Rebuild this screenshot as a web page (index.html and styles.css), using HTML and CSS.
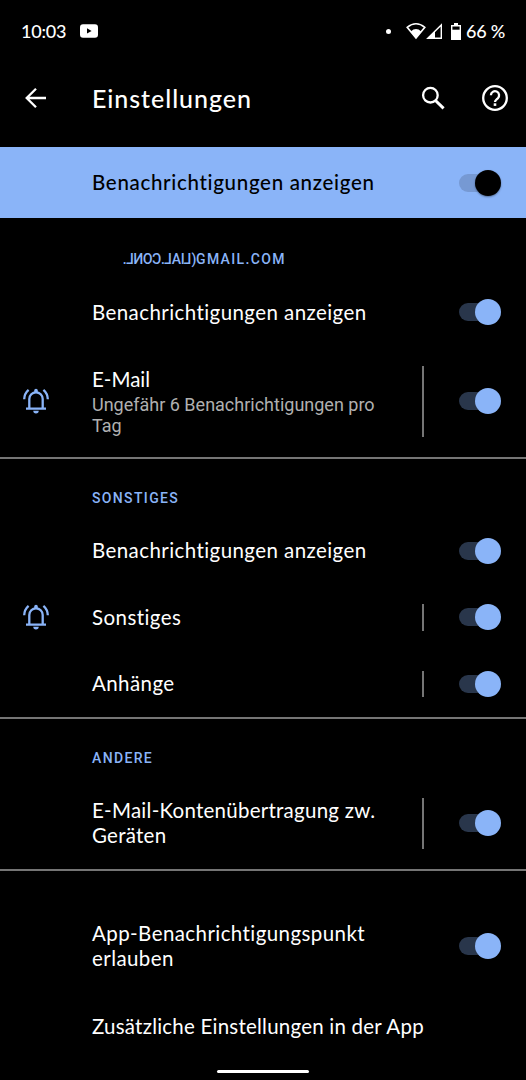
FILE: index.html
```html
<!DOCTYPE html>
<html lang="de">
  <head>
    <meta charset="UTF-8" />
    <title>Einstellungen</title>
    <link rel="stylesheet" href="styles.css">
  </head>
  <body>
    <!-- status bar -->
    <div class="status">
      <span class="time">10:03</span>
      <svg class="yt" width="18" height="14" viewBox="0 0 18 14">
        <rect width="18" height="13.4" y=".3" rx="3" fill="#fff" />
        <path d="M7 4.2v5.4L11.6 7z" fill="#000" />
      </svg>
      <span class="dot"></span>
      <svg class="wifi" width="20" height="18" viewBox="0 0 20 18">
        <path d="M1.2 5.3Q10-1.8 18.8 5.3L10 16z" fill="none" stroke="#fff" stroke-width="1.6" />
        <path d="M4.8 9.4Q10 4.8 15.2 9.4L10 16.2z" fill="#fff" />
      </svg>
      <svg class="signal" width="17" height="17" viewBox="0 0 17 17">
        <path d="M1.8 15.3L15.3 2v13.3z" fill="none" stroke="#fff" stroke-width="1.4" />
        <path d="M1 16L9 8v8z" fill="#fff" />
      </svg>
      <svg class="battery" width="10" height="17" viewBox="0 0 10 17">
        <path d="M3 0h4v2h3v15H0V2h3z" fill="#fff" />
        <path d="M1.4 3.5h7.2v3.2H1.4z" fill="#000" />
      </svg>
      <span class="percent">66 %</span>
    </div>

    <!-- toolbar -->
    <div class="toolbar">
      <svg class="back" width="22" height="22" viewBox="0 0 22 22">
        <path d="M21 11H2.2M11 1.7L1.7 11l9.3 9.3" />
      </svg>
      <h1>Einstellungen</h1>
      <svg class="search" width="24" height="24" viewBox="0 0 24 24">
        <circle cx="9.4" cy="9.2" r="7.3" />
        <path d="M14.2 14.2l8.4 8.2" stroke-width="3" />
      </svg>
      <svg class="help" width="26" height="26" viewBox="0 0 26 26">
        <circle cx="13" cy="13" r="11.8" />
        <path d="M8.9 10.3a4.1 4.1 0 1 1 6.9 3c-1.6 1.4-2.8 1.9-2.8 3.7" />
        <path d="M13 18.3v2.6" stroke-width="2.6" />
      </svg>
    </div>

    <div class="banner">
      <span class="label">Benachrichtigungen anzeigen</span>
      <span class="switch"></span>
    </div>

    <div class="section first">
      <h2 class="account"><span class="prefix"><span class="flip">L.CONL.</span><span>AI</span><span class="flip">L</span><span>)</span></span><span>GMAIL.COM</span></h2>
      <div class="row">
        <span class="label">Benachrichtigungen anzeigen</span>
        <span class="switch"></span>
      </div>
      <div class="row tall">
        <svg class="bell" width="26" height="26" viewBox="0 0 26 26">
          <path d="M3 20.7h20M6.3 20.5V11a6.7 6.7 0 0 1 13.4 0v9.5M1.2 11.3Q1.4 5.3 5.6 1.8M24.8 11.3Q24.6 5.3 20.4 1.8" />
          <path class="fill" d="M11.2 4V2.5a1.8 1.8 0 0 1 3.6 0V4zM10.3 22.8h5.4a2.7 2.7 0 0 1-5.4 0z" />
        </svg>
        <div class="label mail">E-Mail
          <p>Ungefähr 6 Benachrichtigungen pro Tag</p>
        </div>
        <span class="line"></span>
        <span class="switch"></span>
      </div>
    </div>

    <div class="section">
      <h2>SONSTIGES</h2>
      <div class="row">
        <span class="label">Benachrichtigungen anzeigen</span>
        <span class="switch"></span>
      </div>
      <div class="row">
        <svg class="bell" width="26" height="26" viewBox="0 0 26 26">
          <path d="M3 20.7h20M6.3 20.5V11a6.7 6.7 0 0 1 13.4 0v9.5M1.2 11.3Q1.4 5.3 5.6 1.8M24.8 11.3Q24.6 5.3 20.4 1.8" />
          <path class="fill" d="M11.2 4V2.5a1.8 1.8 0 0 1 3.6 0V4zM10.3 22.8h5.4a2.7 2.7 0 0 1-5.4 0z" />
        </svg>
        <span class="label">Sonstiges</span>
        <span class="line"></span>
        <span class="switch"></span>
      </div>
      <div class="row">
        <span class="label">Anhänge</span>
        <span class="line"></span>
        <span class="switch"></span>
      </div>
    </div>

    <div class="section">
      <h2>ANDERE</h2>
      <div class="row">
        <span class="label transfer">E-Mail-Kontenübertragung zw. Geräten</span>
        <span class="line"></span>
        <span class="switch"></span>
      </div>
    </div>

    <div class="section last">
      <div class="row">
        <span class="label">App-Benachrichtigungspunkt erlauben</span>
        <span class="switch"></span>
      </div>
      <div class="row">
        <span class="label wide">Zusätzliche Einstellungen in der App</span>
      </div>
    </div>

    <div class="home"></div>
  </body>
</html>
```

FILE: styles.css
```css
* {
  margin: 0;
  padding: 0;
  box-sizing: border-box;
}

body {
  width: 526px;
  height: 1080px;
  overflow: hidden;
  background: #000;
  color: #fff;
  font-family: Lato, Roboto, sans-serif;
  font-variant-ligatures: none;
}

svg {
  flex: none;
}

/* status bar */
.status {
  display: flex;
  align-items: center;
  height: 62px;
  padding: 0 19px 0 21px;
  font-size: 18px;
  font-weight: 500;
  letter-spacing: -0.2px;
}

.time {
  width: 59px;
}

.dot {
  width: 5px;
  height: 5px;
  margin-left: auto;
  margin-right: 15px;
  border-radius: 50%;
  background: #fff;
}

.signal {
  margin-right: 8px;
}

.battery {
  margin-right: 5px;
}

.percent {
  width: 41px;
  white-space: nowrap;
}

/* toolbar */
.toolbar {
  display: flex;
  align-items: center;
  height: 85px;
  padding: 0 18px 13px 25px;
}

.toolbar svg {
  fill: none;
  stroke: #fff;
  stroke-width: 2.3;
}

.toolbar h1 {
  flex: 1;
  margin-left: 45px;
  font-size: 25px;
  font-weight: 500;
  letter-spacing: 0.95px;
}

.help {
  margin-left: 37px;
}

/* rows */
.banner,
.row {
  display: flex;
  align-items: center;
  padding: 0 25px 0 92px;
}

.banner {
  height: 71px;
  background: #8ab4f8;
  color: #000;
}

.row {
  min-height: 66.5px;
  padding-top: 20px;
  padding-bottom: 20px;
}

.label {
  width: 300px;
  font-size: 20.5px;
  line-height: 25.5px;
  letter-spacing: 0.42px;
}

.banner .label {
  font-weight: 500;
  letter-spacing: 0.68px;
}

.label.mail {
  letter-spacing: 0;
}

.label.transfer {
  letter-spacing: 0.25px;
}

.label.wide {
  width: auto;
  letter-spacing: 0.22px;
  white-space: nowrap;
}

.label p {
  margin-top: 2px;
  color: #b0b0b0;
  font-family: Roboto, sans-serif;
  font-size: 18px;
  line-height: 21px;
}

.tall {
  height: 111.5px;
}

.bell {
  margin-left: -69px;
  margin-right: 43px;
  fill: none;
  stroke: #8ab4f8;
  stroke-width: 2.3;
}

.bell .fill {
  fill: #8ab4f8;
  stroke: none;
}

.line {
  align-self: stretch;
  width: 2px;
  margin-left: 30px;
  background: #757575;
}

/* switch */
.switch {
  position: relative;
  flex: none;
  width: 42px;
  height: 26px;
  margin-left: auto;
}

.switch::before {
  content: "";
  position: absolute;
  left: 0;
  top: 4px;
  width: 38px;
  height: 18px;
  border-radius: 9px;
  background: #29364b;
}

.switch::after {
  content: "";
  position: absolute;
  right: 0;
  top: 0;
  width: 26px;
  height: 26px;
  border-radius: 50%;
  background: #8ab4f8;
}

.banner .switch::before {
  background: #7699d3;
}

.banner .switch::after {
  background: #000;
  box-shadow: 0 1px 2px rgba(0, 0, 0, 0.4);
}

/* sections */
.section {
  border-top: 2px solid #757575;
}

.first {
  border-top: 0;
}

.last {
  padding-top: 29px;
}

.last .row {
  min-height: 68px;
}

.last .row:first-child {
  min-height: 93px;
}

.section h2 {
  height: 58.5px;
  padding: 29px 0 0 92px;
  color: #8ab4f8;
  font-family: Roboto, sans-serif;
  font-size: 14px;
  font-weight: 500;
  line-height: 20px;
  letter-spacing: 1.35px;
}

.first h2 {
  height: 61px;
  padding-top: 31px;
}

/* mirrored part of the account name */
.account {
  display: flex;
}

.section .account {
  padding-left: 123px;
}

.prefix {
  display: flex;
  flex: none;
  width: 73px;
  letter-spacing: -0.4px;
}

.flip {
  transform: scaleX(-1);
}

/* gesture bar */
.home {
  width: 92px;
  height: 3px;
  margin: 9px auto 0;
  border-radius: 2px;
  background: #fff;
}
```
